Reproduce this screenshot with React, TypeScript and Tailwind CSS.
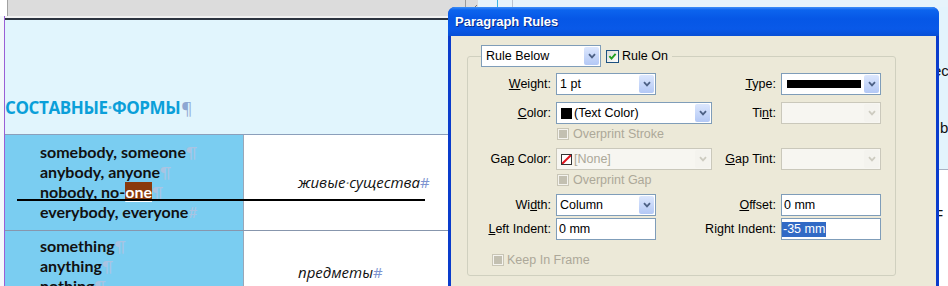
import React from 'react';

const ui = "font-['Liberation_Sans',Arial,sans-serif] text-[12.5px]";

function Chevron({ disabled }: { disabled?: boolean }) {
  return (
    <svg width="8" height="6" viewBox="0 0 8 6">
      <path
        d="M1 1.2 L4 4.4 L7 1.2"
        fill="none"
        stroke={disabled ? '#cdcbc0' : '#4d6185'}
        strokeWidth="1.8"
      />
    </svg>
  );
}

function Select({
  className,
  disabled,
  children,
}: {
  className: string;
  disabled?: boolean;
  children?: React.ReactNode;
}) {
  return (
    <div
      className={`flex h-[22px] items-center border ${
        disabled
          ? 'border-[#cac8bb] bg-[#f7f6f1] text-[#aca899]'
          : 'border-[#7f9db9] bg-white text-black'
      } ${className}`}
    >
      <div className="flex min-w-0 flex-1 items-center gap-[2px] overflow-hidden whitespace-nowrap pl-[3px]">
        {children}
      </div>
      <div
        className={`mr-[1px] flex h-[18px] w-[15px] items-center justify-center rounded-[2px] ${
          disabled
            ? 'bg-[#f4f3ee]'
            : 'bg-gradient-to-b from-[#dce7fd] to-[#b3c8f5]'
        }`}
      >
        <Chevron disabled={disabled} />
      </div>
    </div>
  );
}

function Field({
  children,
  selected,
}: {
  children?: React.ReactNode;
  selected?: boolean;
}) {
  return (
    <div
      className={`flex h-[22px] w-[100px] items-center border border-[#7f9db9] bg-white ${
        selected ? 'pl-0' : 'pl-[2px]'
      }`}
    >
      {children}
    </div>
  );
}

function CheckOn() {
  return (
    <span className="flex h-[13px] w-[13px] items-center justify-center border border-[#1c5180] bg-gradient-to-br from-[#dcdcd6] to-white">
      <svg width="9" height="9" viewBox="0 0 9 9">
        <path
          d="M1.4 4.2 L3.5 6.6 L7.6 1.8"
          fill="none"
          stroke="#21a121"
          strokeWidth="1.9"
        />
      </svg>
    </span>
  );
}

function CheckOff() {
  return (
    <span className="flex h-[12px] w-[12px] items-center justify-center border border-[#c9c6b6] bg-[#f4f3ee]">
      <span className="h-[8px] w-[8px] bg-[#c3c0b1]" />
    </span>
  );
}

function Label({ children }: { children: React.ReactNode }) {
  return (
    <div className="flex justify-end whitespace-nowrap pr-[5px]">{children}</div>
  );
}

const row = 'grid grid-cols-[88px_146px_79px_100px] items-center';

function Dot({ className }: { className: string }) {
  return <span className={className}>·</span>;
}

export default function App() {
  return (
    <div className="relative h-[286px] w-[948px] overflow-hidden bg-white">
      <div className="flex h-full">
        {/* document */}
        <div className="flex w-[939px] shrink-0 flex-col">
          <div className="flex h-[16px] shrink-0">
            <div className="w-[7px] bg-white" />
            <div className="flex w-[471px] justify-end border-l border-[#a2a2a2] bg-[#dcdcdc]">
              <div className="flex w-[13px] items-end border-l border-[#9a9a9a]">
                <svg width="12" height="12" viewBox="0 0 12 12">
                  <path d="M1 11 L11 1" stroke="#777" strokeWidth="1" />
                </svg>
              </div>
            </div>
            <div className="flex flex-1 bg-[#e6f4fb]">
              <div className="w-[19px]" />
              <div className="w-[1px] bg-[#39b5e6]" />
              <div className="w-[14px]" />
              <div className="w-[1px] bg-[#b9c4d0]" />
            </div>
          </div>
          <div className="flex flex-1">
            <div className="w-[4px] bg-[#f4f8fb]" />
            <div className="w-[1px] bg-[#9a5fd6]" />
            <div className="flex flex-1 flex-col">
              <div className="h-[2px] bg-[#f2f2f2]" />
              <div className="h-[2px] bg-[#2c3440]" />
              <div className="flex h-[115px] flex-col justify-end border-b border-[#8b9fbb] bg-[#e1f5fd] pb-[15px]">
                <div className="font-['Open_Sans',sans-serif] text-[17px] font-bold leading-[22px] tracking-[-0.4px] text-[#0b9fd9]">
                  СОСТАВНЫЕ
                  <Dot className="text-[#5cc0e8]" />
                  ФОРМЫ
                  <span className="ml-[1px] font-normal text-[#8ea6d2]">¶</span>
                </div>
              </div>
              <div className="flex h-[96px] border-b border-[#8796ad]">
                <div className="w-[239px] border-r border-[#9aa7b8] bg-[#7acdf1] pl-[35px] pt-[7px] font-['Lato',sans-serif] text-[16px] font-bold leading-[20px] text-[#111]">
                  <div>
                    somebody, someone<span className="font-normal text-[#a9c4e2]">¶</span>
                  </div>
                  <div>
                    anybody, anyone<span className="font-normal text-[#a9c4e2]">¶</span>
                  </div>
                  <div>
                    nobody, no-
                    <span className="bg-[#8a3a0c] text-white underline decoration-white decoration-2 underline-offset-[2px]">
                      one
                    </span>
                    <span className="font-normal text-[#a9c4e2]">¶</span>
                  </div>
                  <div>
                    everybody, everyone<span className="font-normal text-[#a9c4e2]">#</span>
                  </div>
                </div>
                <div className="flex-1 bg-white pl-[54px] pt-[37px] font-['Open_Sans',sans-serif] text-[15px] italic leading-[20px] text-[#111]">
                  живые
                  <Dot className="text-[#777]" />
                  существа<span className="not-italic text-[#7d93d0]">#</span>
                </div>
              </div>
              <div className="flex flex-1">
                <div className="w-[239px] border-r border-[#9aa7b8] bg-[#7acdf1] pl-[35px] pt-[5px] font-['Lato',sans-serif] text-[16px] font-bold leading-[20px] text-[#111]">
                  <div>
                    something<span className="font-normal text-[#a9c4e2]">¶</span>
                  </div>
                  <div>
                    anything<span className="font-normal text-[#a9c4e2]">¶</span>
                  </div>
                  <div>
                    nothing<span className="font-normal text-[#a9c4e2]">¶</span>
                  </div>
                </div>
                <div className="flex-1 bg-white pl-[54px] pt-[31px] font-['Open_Sans',sans-serif] text-[15px] italic leading-[20px] text-[#111]">
                  предметы<span className="not-italic text-[#7d93d0]">#</span>
                </div>
              </div>
            </div>
          </div>
        </div>
        {/* sliver of the next column */}
        <div className="flex w-[9px] flex-col overflow-hidden font-['Liberation_Sans',Arial,sans-serif] text-[15px] leading-[18px] text-[#111]">
          <div className="h-[7px] bg-[#e6f4fb]" />
          <div className="h-[163px] border-b border-[#a9b2c2] bg-[#e3f4fc]">
            <div className="-ml-[6px] mt-[55px] whitespace-nowrap">ec</div>
            <div className="ml-[1px] mt-[39px]">b</div>
          </div>
          <div className="flex-1 bg-white">
            <div className="-ml-[5px] mt-[36px]">F</div>
          </div>
        </div>
      </div>

      {/* rule drawn by InDesign over the text */}
      <div className="absolute left-[17px] top-[199px] h-[2px] w-[408px] bg-black" />

      {/* Paragraph Rules dialog */}
      <div className={`absolute left-[448px] top-[7px] flex h-[300px] w-[491px] flex-col overflow-hidden rounded-t-[7px] bg-[#0a3ccc] ${ui}`}>
        <div className="flex h-[29px] shrink-0 items-center bg-[linear-gradient(to_bottom,#3d8ff7_0px,#0c64ee_3px,#0657e6_12px,#0959e8_22px,#084fd6_29px)] pl-[7px] pt-[1px] text-[13px] font-bold text-white [text-shadow:1px_1px_0_#0b2a86]">
          Paragraph Rules
        </div>
        <div className="mx-[3px] flex-1 bg-[#ece9d8] pt-[9px] text-black">
          <fieldset className="ml-[16px] w-[429px] rounded-[3px] border border-[#d0d0bf] pb-[5px] pt-[6px]">
            <legend className="ml-[13px] flex items-center pr-[4px]">
              <Select className="w-[120px]">
                <span className="pl-[1px]">Rule Below</span>
              </Select>
              <span className="ml-[5px]">
                <CheckOn />
              </span>
              <span className="ml-[3px]">Rule On</span>
            </legend>

            <div className={row}>
              <Label>
                <span>
                  <u>W</u>eight:
                </span>
              </Label>
              <Select className="w-[100px]">1 pt</Select>
              <Label>
                <span>
                  <u>T</u>ype:
                </span>
              </Label>
              <Select className="w-[100px]">
                <span className="ml-[2px] h-[8px] w-[74px] bg-black" />
              </Select>
            </div>

            <div className={`${row} mt-[7px]`}>
              <Label>
                <span>
                  <u>C</u>olor:
                </span>
              </Label>
              <Select className="w-[156px]">
                <span className="ml-[1px] h-[11px] w-[11px] bg-black" />
                <span>(Text Color)</span>
              </Select>
              <Label>
                <span>
                  Ti<u>n</u>t:
                </span>
              </Label>
              <Select className="w-[100px]" disabled />
            </div>

            <div className={`${row} h-[20px]`}>
              <div />
              <div className="col-span-3 flex items-center gap-[4px] pl-[1px] text-[#aca899]">
                <CheckOff />
                <span>Overprint Stroke</span>
              </div>
            </div>

            <div className={`${row} mt-[4px]`}>
              <Label>
                <span>
                  Ga<u>p</u> Color:
                </span>
              </Label>
              <Select className="w-[156px]" disabled>
                <span className="ml-[1px] flex h-[11px] w-[11px] items-center justify-center border border-[#333] bg-white">
                  <svg width="9" height="9" viewBox="0 0 9 9">
                    <path d="M0 9 L9 0" stroke="#e0141e" strokeWidth="2" />
                  </svg>
                </span>
                <span>[None]</span>
              </Select>
              <Label>
                <span>
                  <u>G</u>ap Tint:
                </span>
              </Label>
              <Select className="w-[100px]" disabled />
            </div>

            <div className={`${row} h-[20px]`}>
              <div />
              <div className="col-span-3 flex items-center gap-[4px] pl-[1px] text-[#aca899]">
                <CheckOff />
                <span>Overprint Gap</span>
              </div>
            </div>

            <div className={`${row} mt-[4px]`}>
              <Label>
                <span>
                  Wi<u>d</u>th:
                </span>
              </Label>
              <Select className="w-[100px]">Column</Select>
              <Label>
                <span>
                  <u>O</u>ffset:
                </span>
              </Label>
              <Field>0 mm</Field>
            </div>

            <div className={`${row} mt-[2px]`}>
              <Label>
                <span>
                  <u>L</u>eft Indent:
                </span>
              </Label>
              <Field>0 mm</Field>
              <Label>
                <span>
                  Ri<u>g</u>ht Indent:
                </span>
              </Label>
              <Field selected>
                <span className="bg-[#316ac5] pl-[1px] pr-[1px] leading-[15px] text-white">
                  -35 mm
                </span>
              </Field>
            </div>

            <div className="mt-[10px] flex h-[20px] items-center gap-[3px] pl-[24px] text-[#aca899]">
              <CheckOff />
              <span>Keep In Frame</span>
            </div>
          </fieldset>
        </div>
      </div>
    </div>
  );
}
